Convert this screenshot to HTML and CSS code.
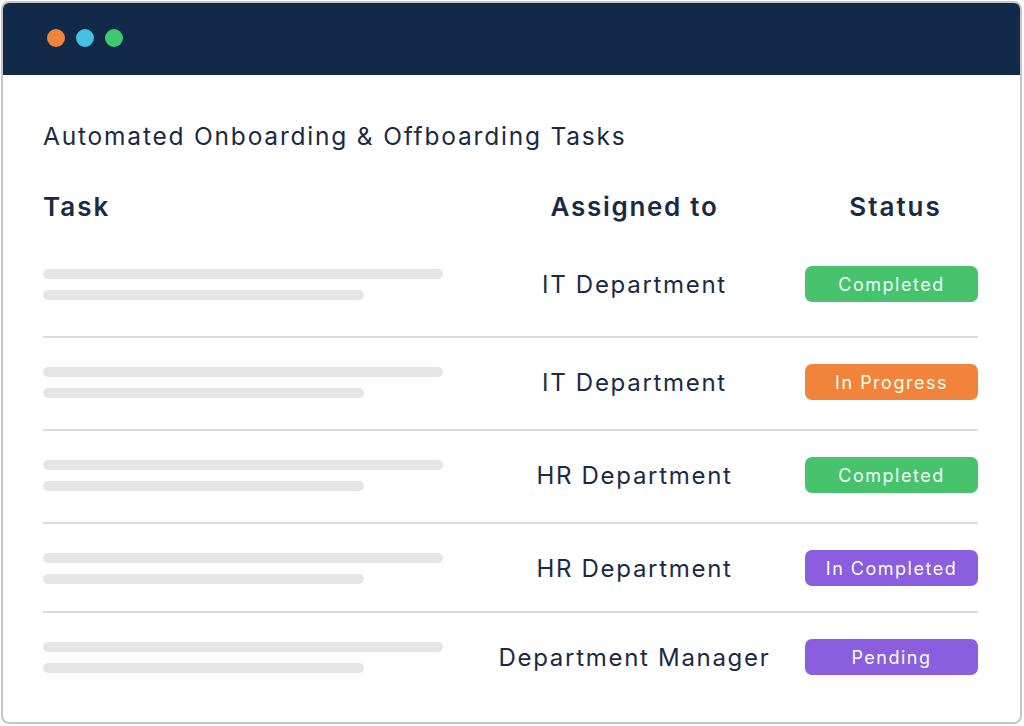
FILE: index.html
```html
<!DOCTYPE html>
<html lang="en">
<head>
  <title>Onboarding Tasks</title>
  <link rel="stylesheet" href="styles.css">
</head>

<body>
  <div class="window">
    <header class="titlebar">
      <span class="dot orange"></span>
      <span class="dot blue"></span>
      <span class="dot green"></span>
    </header>

    <main class="content">
      <h1>Automated Onboarding &amp; Offboarding Tasks</h1>

      <div class="tasks">
        <div class="row head">
          <div class="task">Task</div>
          <div class="assigned">Assigned to</div>
          <div class="status">Status</div>
        </div>

        <div class="row">
          <div class="task"><span class="bar long"></span><span class="bar short"></span></div>
          <div class="assigned">IT Department</div>
          <div class="status"><span class="badge done">Completed</span></div>
        </div>

        <div class="row">
          <div class="task"><span class="bar long"></span><span class="bar short"></span></div>
          <div class="assigned">IT Department</div>
          <div class="status"><span class="badge progress">In Progress</span></div>
        </div>

        <div class="row">
          <div class="task"><span class="bar long"></span><span class="bar short"></span></div>
          <div class="assigned">HR Department</div>
          <div class="status"><span class="badge done">Completed</span></div>
        </div>

        <div class="row tight">
          <div class="task"><span class="bar long"></span><span class="bar short"></span></div>
          <div class="assigned">HR Department</div>
          <div class="status"><span class="badge waiting">In Completed</span></div>
        </div>

        <div class="row">
          <div class="task"><span class="bar long"></span><span class="bar short"></span></div>
          <div class="assigned">Department Manager</div>
          <div class="status"><span class="badge waiting">Pending</span></div>
        </div>
      </div>
    </main>
  </div>
</body>
</html>
```

FILE: styles.css
```css
*,
*::before,
*::after {
  box-sizing: border-box;
}

html {
  font-family: Inter, "Noto Sans", sans-serif;
  color: #1b2a44;
}
body {
  margin: 0;
  background: #fff;
}

.window {
  margin: 1px 2px 2px 1px;
  height: 723px;
  border: 2px solid #c6c6c6;
  border-radius: 8px;
  overflow: hidden;
}

.titlebar {
  height: 72px;
  background: #13294a;
  display: flex;
  align-items: center;
  gap: 11px;
  padding-left: 44px;
  padding-bottom: 2px;
}
.dot {
  width: 18px;
  height: 18px;
  border-radius: 50%;
}
.dot.orange { background: #f0843a; }
.dot.blue   { background: #45bfe4; }
.dot.green  { background: #3fc86e; }

.content {
  padding: 46px 0 0 40px;
}

h1 {
  margin: 0 0 40px;
  font-size: 24.5px;
  font-weight: 400;
  letter-spacing: 1.8px;
}

.tasks {
  width: 935px;
}

.row {
  display: grid;
  grid-template-columns: 421px 341px 173px;
  align-items: center;
  padding: 26px 0 29px;
  border-bottom: 2px solid #dcdcdc;
}
.row:nth-child(2) {
  padding: 27px 0 34px;
}
.row.tight {
  padding-bottom: 25px;
}
.row:last-child {
  border-bottom: none;
}
.row.head {
  padding: 0 0 17px;
  border-bottom: none;
  font-size: 26px;
  font-weight: 600;
  letter-spacing: 2px;
}

.assigned {
  text-align: center;
  font-size: 24px;
  letter-spacing: 1.7px;
}
.head .assigned {
  font-size: 26px;
}
.head .status {
  text-align: center;
  padding-left: 8px;
}

.task {
  display: flex;
  flex-direction: column;
  gap: 11px;
}
.bar {
  height: 10px;
  border-radius: 5px;
  background: #e5e5e5;
}
.bar.long  { width: 400px; }
.bar.short { width: 321px; }

.badge {
  display: flex;
  align-items: center;
  justify-content: center;
  height: 36px;
  border-radius: 7px;
  color: #f4fff6;
  font-size: 18px;
  letter-spacing: 1.5px;
}
.badge.done     { background: #47c36d; }
.badge.progress { background: #f2833a; }
.badge.waiting  { background: #8b5ddf; }
```
